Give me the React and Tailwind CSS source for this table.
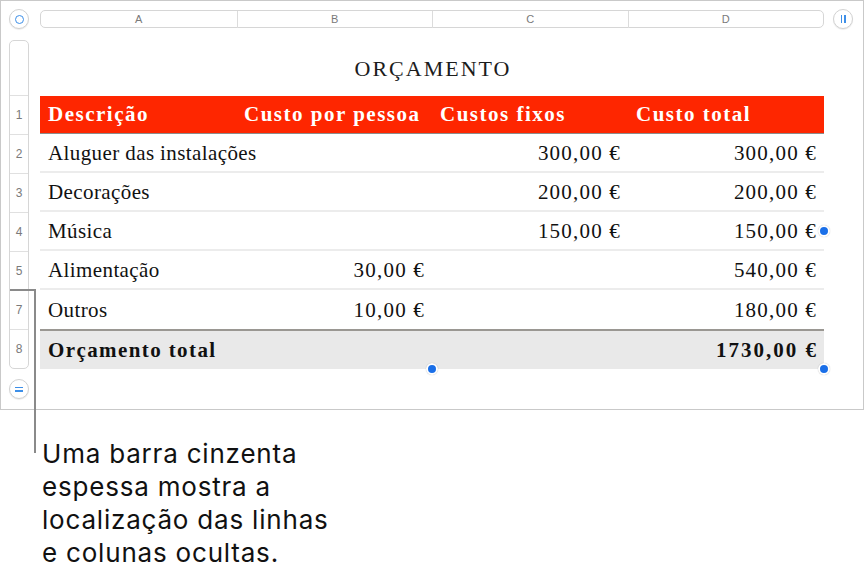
import React from "react";

const cols = ["A", "B", "C", "D"];
const rowNums = ["1", "2", "3", "4", "5", "7", "8"];

const rows = [
  ["Aluguer das instalações", "", "300,00 €", "300,00 €"],
  ["Decorações", "", "200,00 €", "200,00 €"],
  ["Música", "", "150,00 €", "150,00 €"],
  ["Alimentação", "30,00 €", "", "540,00 €"],
  ["Outros", "10,00 €", "", "180,00 €"],
];

const serif = { fontFamily: '"Liberation Serif", "DejaVu Serif", serif' };

function Knob({ children }) {
  return (
    <div className="w-5 h-5 rounded-full bg-white border border-[#d2d2d2] shadow-[0_1px_1px_rgba(0,0,0,0.08)] flex items-center justify-center">
      {children}
    </div>
  );
}

function Dot({ className }) {
  return (
    <div
      className={`absolute w-[12px] h-[12px] -translate-x-1/2 -translate-y-1/2 rounded-full bg-[#1a6fe8] border-2 border-white shadow-[0_0_1px_rgba(0,0,0,0.3)] ${className}`}
    />
  );
}

export default function App() {
  return (
    <div className="relative w-[865px] h-[585px] bg-white" style={{ fontFamily: '"Liberation Sans", Arial, sans-serif' }}>
      {/* frame */}
      <div className="w-[864px] h-[410px] border border-[#c9c9c9] pl-2 pt-2">
        {/* column headers */}
        <div className="flex items-center">
          <Knob>
            <div className="w-[9px] h-[9px] rounded-full border-[1.5px] border-[#3d8fe8]" />
          </Knob>
          <div className="ml-[11px] w-[784px] h-[18px] grid grid-cols-4 bg-white border border-[#d6d6d6] rounded-[5px]">
            {cols.map((c, i) => (
              <div
                key={c}
                className={`flex items-center justify-center text-[11px] text-[#7a7a7a] ${i > 0 ? "border-l border-[#dcdcdc]" : ""}`}
              >
                {c}
              </div>
            ))}
          </div>
          <div className="ml-[9px]">
            <Knob>
              <div className="flex gap-[2px]">
                <div className="w-[1.5px] h-[8px] bg-[#3d8fe8]" />
                <div className="w-[1.5px] h-[8px] bg-[#3d8fe8]" />
              </div>
            </Knob>
          </div>
        </div>

        {/* body */}
        <div className="flex mt-[11px]">
          <div className="w-5 flex flex-col">
            <div className="w-5 border border-[#d6d6d6] rounded-[5px] bg-white flex flex-col">
              <div className="h-[54px]" />
              {rowNums.map((n) => (
                <div
                  key={n}
                  className="h-[39px] border-t border-[#e0e0e0] flex items-center justify-center text-[12px] text-[#7a7a7a]"
                >
                  {n}
                </div>
              ))}
            </div>
            <div className="mt-[10px]">
              <Knob>
                <div className="flex flex-col gap-[2px]">
                  <div className="w-[8px] h-[1.5px] bg-[#3d8fe8]" />
                  <div className="w-[8px] h-[1.5px] bg-[#3d8fe8]" />
                </div>
              </Knob>
            </div>
          </div>

          <div className="relative ml-[11px] w-[784px]" style={serif}>
            <div className="h-[55px] flex items-center justify-center pt-[2px] pl-[2px] text-[22px] tracking-[2px] text-[#1c1c1c]">
              ORÇAMENTO
            </div>
            <div className="grid grid-cols-4 h-[38px] mt-px pt-px bg-[#fe2600] border-b border-[#8c8c8c] text-white font-bold text-[21px] tracking-[1.5px]">
              {["Descrição", "Custo por pessoa", "Custos fixos", "Custo total"].map((h) => (
                <div key={h} className="flex items-center px-2 whitespace-nowrap">
                  {h}
                </div>
              ))}
            </div>
            {rows.map((r, i) => (
              <div
                key={i}
                className={`grid grid-cols-4 h-[39px] pt-[2px] text-[21px] text-[#111] ${i < rows.length - 1 ? "border-b-2 border-[#ececec]" : ""}`}
              >
                {r.map((v, j) => (
                  <div
                    key={j}
                    className={`flex items-center whitespace-nowrap ${j === 0 ? "justify-start px-2 tracking-[0.4px]" : "justify-end pl-2 pr-[7px] tracking-[1.2px]"}`}
                  >
                    {v}
                  </div>
                ))}
              </div>
            ))}
            <div className="grid grid-cols-4 h-[40px] pt-px bg-[#e9e9e9] border-t-2 border-[#9a9792] font-bold text-[21px] text-[#111]">
              <div className="col-span-3 flex items-center px-2 whitespace-nowrap tracking-[1.4px]">Orçamento total</div>
              <div className="flex items-center justify-end pl-2 pr-[6px] tracking-[2px]">1730,00 €</div>
            </div>

            <Dot className="left-[392px] top-[329px]" />
            <Dot className="left-[784px] top-[329px]" />
            <Dot className="left-[784px] top-[191px]" />
          </div>
        </div>
      </div>

      {/* callout */}
      <div className="absolute left-[10px] top-[289px] w-[26px] h-[2px] bg-[#8a8a8a]" />
      <div className="absolute left-[34px] top-[289px] w-[2px] h-[164px] bg-[#8a8a8a]" />

      <div
        className="pl-[42px] mt-[27px] text-[26px] leading-[33px] tracking-[0.8px] text-[#111]"
        style={{ fontFamily: 'Inter, "Liberation Sans", sans-serif' }}
      >
        Uma barra cinzenta
        <br />
        espessa mostra a
        <br />
        localização das linhas
        <br />e colunas ocultas.
      </div>
    </div>
  );
}
